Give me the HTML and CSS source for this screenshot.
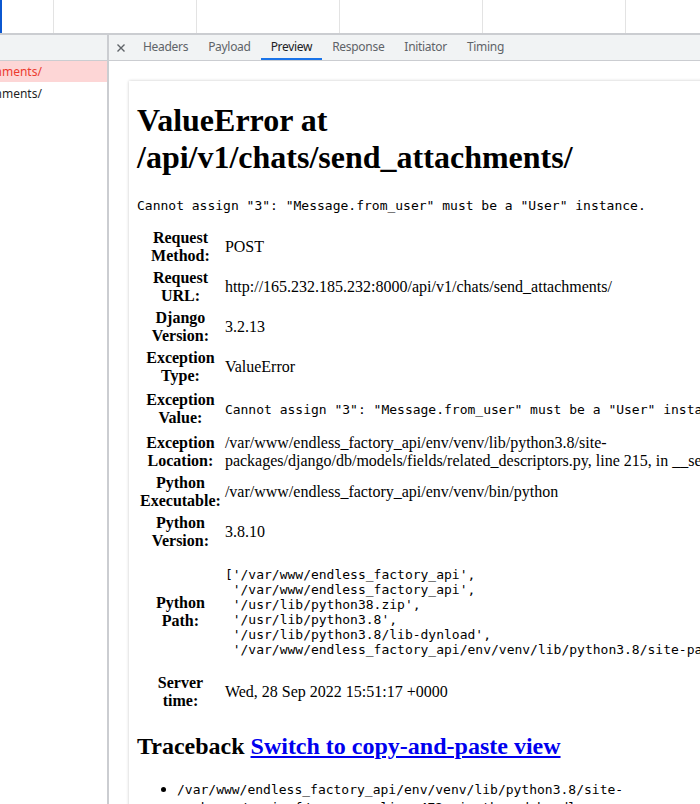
FILE: index.html
```html
<!DOCTYPE html>
<html>
<head>
<meta charset="utf-8">
<link rel="stylesheet" href="styles.css">
</head>
<body>
<div class="app">
  <div class="overview">
    <div class="ov-cell ov-first"></div>
    <div class="ov-cell"></div>
    <div class="ov-cell"></div>
    <div class="ov-cell"></div>
    <div class="ov-cell"></div>
    <div class="ov-cell"></div>
  </div>
  <div class="split">
    <div class="left">
      <div class="left-head"></div>
      <div class="req-row req-error"><span class="req-name">send_attachments/</span></div>
      <div class="req-row"><span class="req-name">send_attachments/</span></div>
    </div>
    <div class="right">
      <div class="tabbar">
        <div class="close-btn">
          <svg width="8" height="8" viewBox="0 0 8 8"><path d="M0.5 0.5 L7.5 7.5 M7.5 0.5 L0.5 7.5" stroke="#5f6368" stroke-width="1.4" fill="none"/></svg>
        </div>
        <div class="tab">Headers</div>
        <div class="tab">Payload</div>
        <div class="tab tab-active">Preview</div>
        <div class="tab">Response</div>
        <div class="tab">Initiator</div>
        <div class="tab">Timing</div>
      </div>
      <div class="preview">
        <div class="frame">
          <h1 class="doc-title">ValueError at /api/v1/chats/send_attachments/</h1>
          <pre class="doc-pre">Cannot assign "3": "Message.from_user" must be a "User" instance.</pre>
          <table class="meta">
            <tr><th>Request Method:</th><td>POST</td></tr>
            <tr><th>Request URL:</th><td>http://165.232.185.232:8000/api/v1/chats/send_attachments/</td></tr>
            <tr><th>Django Version:</th><td>3.2.13</td></tr>
            <tr><th>Exception Type:</th><td>ValueError</td></tr>
            <tr><th>Exception Value:</th><td><pre class="doc-pre">Cannot assign "3": "Message.from_user" must be a "User" instance.</pre></td></tr>
            <tr><th>Exception Location:</th><td>/var/www/endless_factory_api/env/venv/lib/python3.8/site-packages/django/db/models/fields/related_descriptors.py, line 215, in __set__</td></tr>
            <tr><th>Python Executable:</th><td>/var/www/endless_factory_api/env/venv/bin/python</td></tr>
            <tr><th>Python Version:</th><td>3.8.10</td></tr>
            <tr><th>Python Path:</th><td><pre class="doc-pre">['/var/www/endless_factory_api',
 '/var/www/endless_factory_api',
 '/usr/lib/python38.zip',
 '/usr/lib/python3.8',
 '/usr/lib/python3.8/lib-dynload',
 '/var/www/endless_factory_api/env/venv/lib/python3.8/site-packages']</pre></td></tr>
            <tr><th>Server time:</th><td>Wed, 28 Sep 2022 15:51:17 +0000</td></tr>
          </table>
          <h2 class="doc-h2">Traceback <a class="doc-link" href="#">Switch to copy-and-paste view</a></h2>
          <ul class="doc-list">
            <li class="doc-item"><code class="doc-code">/var/www/endless_factory_api/env/venv/lib/python3.8/site-packages/asgiref/sync.py, line 472, in thread_handler</code></li>
          </ul>
        </div>
      </div>
    </div>
  </div>
</div>
</body>
</html>
```

FILE: styles.css
```css
html, body {
  margin: 0;
  padding: 0;
  width: 700px;
  height: 804px;
  overflow: hidden;
  background: #ffffff;
}

.app {
  display: flex;
  flex-direction: column;
  height: 804px;
  font-family: "Noto Sans", "DejaVu Sans", sans-serif;
  font-size: 12px;
}

.overview {
  display: flex;
  height: 33px;
  flex: none;
  border-bottom: 2px solid #cbcdd1;
  background: #ffffff;
}

.ov-cell {
  flex: none;
  width: 142px;
  border-left: 1px solid #e3e3e3;
}

.ov-first {
  width: 51px;
  border-left: 2px solid #0b57d0;
}

.split {
  display: flex;
  flex: 1;
  min-height: 0;
}

.left {
  flex: none;
  width: 107px;
  border-right: 2px solid #cbcdd1;
  overflow: hidden;
}

.left-head {
  height: 25px;
  background: #f1f3f4;
  border-bottom: 1px solid #cbcdd1;
}

.req-row {
  height: 21px;
  line-height: 22px;
  white-space: nowrap;
  color: #1f1f1f;
  overflow: hidden;
}

.req-row + .req-row {
  margin-top: 1px;
}

.req-error {
  background: #fdd6d6;
  color: #ec3b2f;
}

.req-name {
  display: inline-block;
  margin-left: -66px;
}

.right {
  flex: 1;
  min-width: 0;
  display: flex;
  flex-direction: column;
  overflow: hidden;
}

.tabbar {
  flex: none;
  display: flex;
  align-items: stretch;
  height: 25px;
  background: #f1f3f4;
  border-bottom: 1px solid #cbcdd1;
}

.close-btn {
  width: 24px;
  display: flex;
  align-items: center;
  justify-content: center;
}

.tab {
  padding: 0 10px;
  display: flex;
  align-items: center;
  color: #5f6368;
  white-space: nowrap;
  letter-spacing: -0.3px;
  border-bottom: 2px solid transparent;
  box-sizing: border-box;
}

.tab-active {
  color: #202124;
  border-bottom-color: #1a73e8;
}

.preview {
  flex: 1;
  padding: 20px 0 0 20px;
  overflow: hidden;
  background: #ffffff;
}

.frame {
  width: 584px;
  min-height: 760px;
  padding: 8px;
  background: #ffffff;
  box-shadow: 0 0 3px rgba(0, 0, 0, 0.22);
  font-family: "Liberation Serif", "Times New Roman", serif;
  font-size: 16px;
  color: #000000;
}

.doc-title {
  font-size: 32px;
  font-weight: bold;
  margin: 13.44px 0 21.44px 0;
}

.doc-pre {
  font-family: "DejaVu Sans Mono", monospace;
  font-size: 13px;
  margin: 13px 0;
  white-space: pre;
}

.meta {
  border-spacing: 2px;
  border-collapse: separate;
}

.meta th {
  font-weight: bold;
  text-align: center;
  padding: 1px;
  vertical-align: middle;
}

.meta td {
  padding: 1px;
  vertical-align: middle;
}

.doc-h2 {
  font-size: 24px;
  font-weight: bold;
  margin: 19.92px 0;
}

.doc-link {
  color: #0000ee;
  text-decoration: underline;
}

.doc-list {
  margin: 16px 0;
  padding-left: 40px;
}

.doc-code {
  font-family: "DejaVu Sans Mono", monospace;
  font-size: 13px;
}
```
